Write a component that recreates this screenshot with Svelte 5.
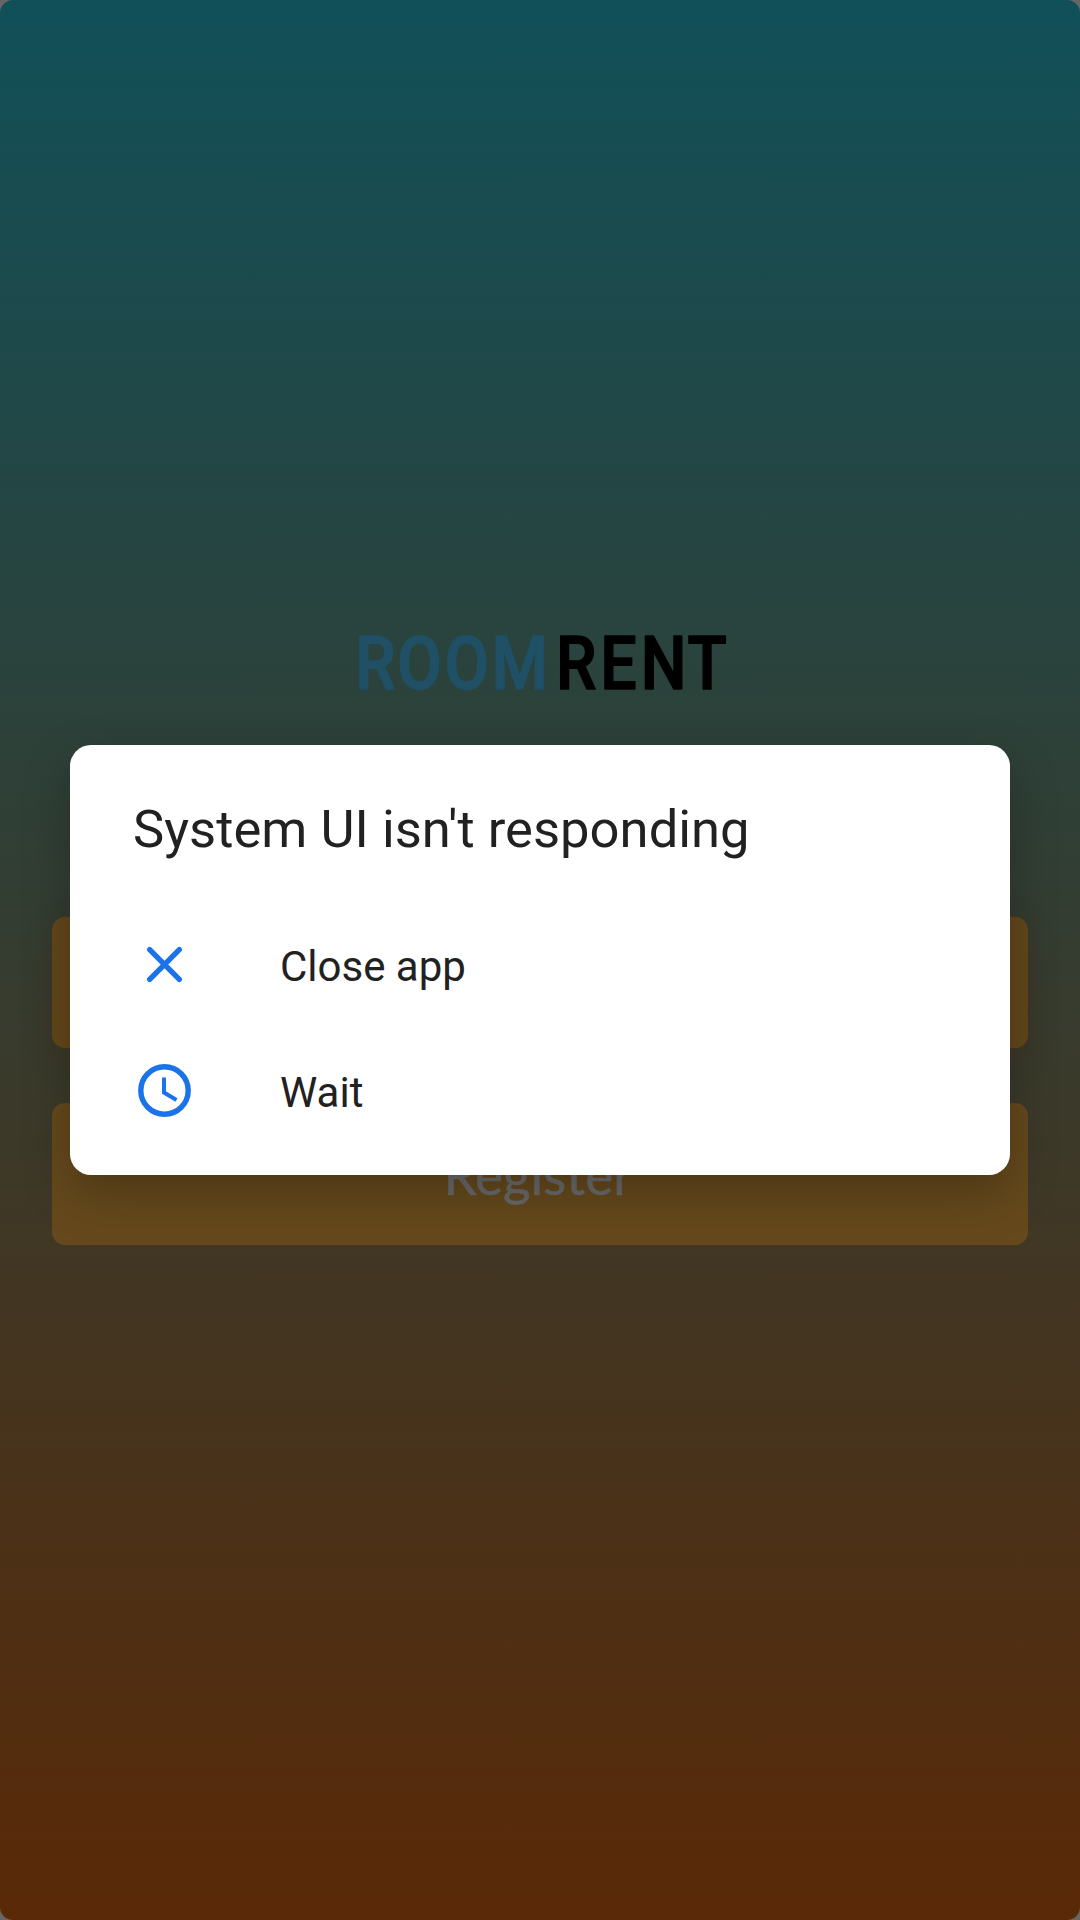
<script>
  const actions = ['Close app', 'Wait'];
</script>

<main class="screen">
  <div class="app">
    <svg class="logo" width="380" height="110" viewBox="350 605 380 110" aria-label="ROOMRENT">
      <g transform="scale(0.86 1)">
        <text class="room" y="689.5" x="413 462 517 571.5">ROOM</text>
        <text class="rent" y="689.5" x="646.5 698 745 799.5">RENT</text>
      </g>
    </svg>
    <button class="login">Login</button>
    <button class="register">Register</button>
  </div>
  <div class="overlay">
    <section class="dialog" role="alertdialog" aria-labelledby="title">
      <h1 id="title">System UI isn't responding</h1>
      {#each actions as action, i}
        <div class="row">
          <svg class="icon" width="63" height="63" viewBox="0 0 63 63">
            {#if i === 0}
              <path d="M16.7 16.7 46.3 46.3M46.3 16.7 16.7 46.3" stroke-width="5.4" stroke-linecap="round" />
            {:else}
              <circle cx="31.5" cy="31.5" r="23.7" stroke-width="5.4" />
              <path d="M31 18.5V33.5L43.5 41" stroke-width="4" />
            {/if}
          </svg>
          <span>{action}</span>
        </div>
      {/each}
    </section>
  </div>
</main>

<style>
  :global(body) {
    margin: 0;
    background: #666;
  }
  .screen {
    display: grid;
    width: 1080px;
    height: 1920px;
    overflow: hidden;
    border-radius: 13px;
    background: linear-gradient(#115059, #5a2907);
  }
  .app,
  .overlay {
    grid-area: 1 / 1;
  }
  .app {
    display: flex;
    flex-direction: column;
    align-items: center;
    padding: 605px 52.4px 0;
  }
  .logo {
    display: block;
    margin-bottom: 202px;
    overflow: visible;
  }
  .logo text {
    font: 500 75px Roboto, sans-serif;
    stroke-width: 1.6px;
    stroke-linejoin: round;
  }
  .room {
    fill: #205066;
    stroke: #205066;
  }
  .rent {
    fill: #000;
    stroke: #000;
  }
  button {
    width: 100%;
    padding: 0;
    border: 0;
    border-radius: 13px;
    color: #6a6a6a;
    font: 400 53px Lato, sans-serif;
    -webkit-text-stroke: 0.6px #6a6a6a;
  }
  .login {
    height: 131px;
    margin-bottom: 55px;
    background: #63471b;
    box-shadow: 0 8px 24px rgba(76, 43, 20, 0.35);
  }
  .register {
    height: 142px;
    padding: 1px 4px 0 0;
    background: #65491c;
  }
  .overlay {
    display: flex;
    align-items: center;
    justify-content: center;
  }
  .dialog {
    box-sizing: border-box;
    width: 940px;
    height: 430px;
    padding: 53px 63px 0;
    border-radius: 21px;
    background: #fff;
    color: #212121;
    font-family: Roboto, sans-serif;
    box-shadow: 0 18px 48px rgba(0, 0, 0, 0.26);
  }
  h1 {
    margin: 0 0 41px;
    font-size: 52.5px;
    font-weight: 400;
    line-height: 62px;
    letter-spacing: 0.04px;
  }
  .row {
    display: flex;
    align-items: center;
    gap: 84px;
    height: 126px;
    font-size: 42px;
  }
  .row span {
    padding-top: 4px;
  }
  .icon {
    fill: none;
    stroke: #1a73e8;
  }
</style>
